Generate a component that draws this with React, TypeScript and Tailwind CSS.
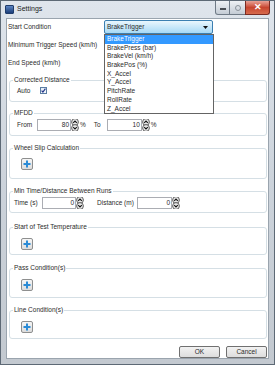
import React from "react";

const items = [
  "BrakeTrigger",
  "BrakePress (bar)",
  "BrakeVel (km/h)",
  "BrakePos (%)",
  "X_Accel",
  "Y_Accel",
  "PitchRate",
  "RollRate",
  "Z_Accel",
];

function Spinner() {
  return (
    <svg width="8" height="12" viewBox="0 0 8 12" className="shrink-0">
      <circle cx="4" cy="3" r="3.4" fill="#e9e9e9" stroke="#3a3a3a" strokeWidth="0.8" />
      <path d="M2.2 3.9 L4 2.1 L5.8 3.9" fill="none" stroke="#111" strokeWidth="1.1" />
      <circle cx="4" cy="9" r="3.4" fill="#e9e9e9" stroke="#3a3a3a" strokeWidth="0.8" />
      <path d="M2.2 8.1 L4 9.9 L5.8 8.1" fill="none" stroke="#111" strokeWidth="1.1" />
    </svg>
  );
}

function NumBox({ value, w }: { value: string; w: string }) {
  return (
    <div className={`flex h-[12px] items-center justify-end border border-[#abadb3] bg-white pr-[1px] ${w}`}>
      {value}
    </div>
  );
}

function PlusButton() {
  return (
    <div className="grid size-[12px] place-items-center rounded-[2px] border border-[#8e8f8f] bg-gradient-to-b from-[#f6f6f6] to-[#dcdcdc]">
      <svg width="8" height="8" viewBox="0 0 8 8">
        <rect x="3" y="0.5" width="2" height="7" fill="#2b8bd6" />
        <rect x="0.5" y="3" width="7" height="2" fill="#2b8bd6" />
      </svg>
    </div>
  );
}

function Group({ title, className, children }: { title: string; className: string; children?: React.ReactNode }) {
  return (
    <fieldset className={`ml-[1px] rounded-[3px] border border-[#d5dfe5] px-[3px] ${className}`}>
      <legend className="h-[8px] px-[1px] leading-[8px]">{title}</legend>
      {children}
    </fieldset>
  );
}

export default function App() {
  return (
    <div className="flex h-[365px] w-[275px] flex-col border border-[#5d6975] bg-gradient-to-b from-[#dfe5ec] via-[#ccd3db] to-[#c3c9d0] font-['Liberation_Sans',Arial,sans-serif] text-[6.5px] text-[#2b2b2b]">
      <div className="flex h-[17px] shrink-0 items-start justify-between">
        <div className="flex items-center gap-[3px] pl-[4px] pt-[3px]">
          <div className="h-[9px] w-[9px] rounded-[1px] border border-[#1f3c6b] bg-gradient-to-b from-[#5d86c4] to-[#1b3d78]" />
          <span className="text-[7px] text-[#1b1b1b]">Settings</span>
        </div>
        <div className="mr-[4px] flex">
          <div className="flex h-[14px] w-[15px] items-center justify-center rounded-bl-[3px] border border-t-0 border-[#6f7a86] bg-gradient-to-b from-[#eef1f4] to-[#c4ccd5]">
            <div className="mt-[3px] h-[2px] w-[6px] bg-[#4a4f55]" />
          </div>
          <div className="flex h-[14px] w-[15px] items-center justify-center border-b border-[#6f7a86] bg-gradient-to-b from-[#eef1f4] to-[#c4ccd5]">
            <div className="size-[6px] rounded-full border-[1.5px] border-[#8b939b]" />
          </div>
          <div className="flex h-[14px] w-[25px] items-center justify-center rounded-br-[3px] border border-t-0 border-[#7a2b22] bg-gradient-to-b from-[#e8a196] via-[#c8452f] to-[#d66b4d] text-[9px] font-bold text-white">
            ✕
          </div>
        </div>
      </div>

      <div className="mx-[5px] mb-[5px] flex flex-1 flex-col border border-[#9aa4ae] bg-white pl-[1px] pr-[1px]">
        <div className="mt-[1px] flex h-[14px] items-center">
          <span className="w-[96px]">Start Condition</span>
          <div className="relative">
            <div className="flex h-[14px] w-[109px] items-center justify-between rounded-[2px] border border-[#3c7fb1] bg-gradient-to-b from-[#eaf6fd] to-[#a7d9f5] px-[2px]">
              <span>BrakeTrigger</span>
              <svg width="5" height="3" viewBox="0 0 5 3" className="mr-[2px]">
                <path d="M0 0 L5 0 L2.5 3 Z" fill="#111" />
              </svg>
            </div>
            <div className="absolute left-0 top-full z-10 w-[110px] border border-[#646464] bg-white">
              {items.map((it, i) => (
                <div
                  key={it}
                  className={`h-[8.7px] pl-[2px] leading-[8.7px] ${i === 0 ? "bg-[#3399ff] text-white" : ""}`}
                >
                  {it}
                </div>
              ))}
            </div>
          </div>
        </div>
        <div className="mt-[4px] flex h-[14px] items-center">Minimum Trigger Speed (km/h)</div>
        <div className="mt-[4px] flex h-[14px] items-center">End Speed (km/h)</div>

        <Group title="Corrected Distance" className="mt-[6px] pb-[4px]">
          <div className="flex h-[13px] items-center pl-[4px]">
            <span className="w-[23px]">Auto</span>
            <div className="grid size-[7px] place-items-center border border-[#5b7da3] bg-gradient-to-b from-[#e3ecf6] to-[#f6f9fc]">
              <svg width="5" height="5" viewBox="0 0 5 5">
                <path d="M0.6 2.6 L1.9 4.1 L4.4 0.7" fill="none" stroke="#1d2f86" strokeWidth="1.1" />
              </svg>
            </div>
          </div>
        </Group>

        <Group title="MFDD" className="mt-[7px] pb-[4px]">
          <div className="mt-[1px] flex h-[13px] items-center pl-[4px]">
            <span className="w-[20px]">From</span>
            <NumBox value="80" w="w-[34px]" />
            <Spinner />
            <span className="ml-[1px]">%</span>
            <span className="ml-[8px] w-[13px]">To</span>
            <NumBox value="10" w="w-[35px]" />
            <Spinner />
            <span className="ml-[1px]">%</span>
          </div>
        </Group>

        <Group title="Wheel Slip Calculation" className="mt-[8px] pb-[8px]">
          <div className="mt-[6px] pl-[8px]">
            <PlusButton />
          </div>
        </Group>

        <Group title="Min Time/Distance Between Runs" className="mt-[8px] pb-[3px]">
          <div className="mt-[2px] flex h-[12px] items-center pl-[1px]">
            <span className="w-[28px]">Time (s)</span>
            <NumBox value="0" w="w-[34px]" />
            <Spinner />
            <span className="ml-[13px] w-[40px]">Distance (m)</span>
            <NumBox value="0" w="w-[35px]" />
            <Spinner />
          </div>
        </Group>

        <Group title="Start of Test Temperature" className="mt-[10px] pb-[4px]">
          <div className="mt-[7px] pl-[8px]">
            <PlusButton />
          </div>
        </Group>

        <Group title="Pass Condition(s)" className="mt-[9px] pb-[6px]">
          <div className="mt-[7px] pl-[8px]">
            <PlusButton />
          </div>
        </Group>

        <Group title="Line Condition(s)" className="mt-[8px] pb-[5px]">
          <div className="mt-[7px] pl-[8px]">
            <PlusButton />
          </div>
        </Group>

        <div className="mt-[7px] flex justify-end gap-[6px]">
          <button className="h-[12px] w-[41px] rounded-[2px] border border-[#707070] bg-gradient-to-b from-[#f2f2f2] to-[#dddddd] leading-[10px]">
            OK
          </button>
          <button className="h-[12px] w-[41px] rounded-[2px] border border-[#707070] bg-gradient-to-b from-[#f2f2f2] to-[#dddddd] leading-[10px]">
            Cancel
          </button>
        </div>
      </div>
    </div>
  );
}
